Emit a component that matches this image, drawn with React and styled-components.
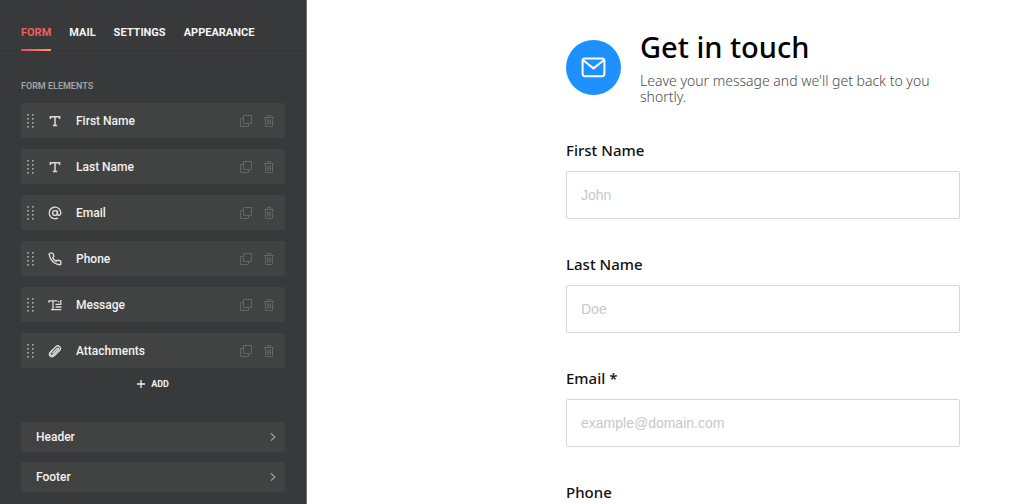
import React from "react";
import styled, { createGlobalStyle } from "styled-components";

const GlobalStyle = createGlobalStyle`
  *, *::before, *::after { box-sizing: border-box; }
  body { margin: 0; background: #fff; }
  button, input { font: inherit; margin: 0; }
`;

const Shell = styled.div`
  display: grid;
  grid-template-columns: 307px minmax(0, 1fr);
  height: 100vh;
`;

const Sidebar = styled.aside`
  background: #38393b;
  border-right: 1px solid #6c6d6e;
  color: #f1f1f1;
  font-family: Roboto, "Liberation Sans", sans-serif;
  overflow-y: auto;
  scrollbar-width: none;
`;

const Tabs = styled.nav`
  display: flex;
  gap: 18px;
  padding: 15px 21px 0;
  border-bottom: 1px solid #333436;
`;

const Tab = styled.a`
  position: relative;
  padding: 10px 0 9px;
  font-size: 11px;
  line-height: 16px;
  font-weight: 700;
  text-decoration: none;
  text-transform: uppercase;
  color: ${(p) => (p.$active ? "#f25c5c" : "#f4f4f4")};

  &::after {
    content: "";
    display: ${(p) => (p.$active ? "block" : "none")};
    position: absolute;
    left: 0;
    right: 0;
    bottom: -1px;
    height: 2px;
    background: linear-gradient(90deg, #f93a78, #f7a14c);
  }
`;

const Panel = styled.div`
  padding: 28px 21px 12px;
`;

const SectionTitle = styled.h2`
  margin: 0 0 10px;
  font-size: 9px;
  line-height: 14px;
  font-weight: 600;
  text-transform: uppercase;
  color: #a3a4a4;
`;

const ElementList = styled.ul`
  display: grid;
  gap: 11px;
  margin: 0;
  padding: 0;
  list-style: none;
`;

const ElementRow = styled.li`
  display: flex;
  align-items: center;
  height: 35px;
  padding: 0 9px 0 5px;
  border-radius: 2px;
  background: #414342;
`;

const ElementIcon = styled.span`
  display: flex;
  margin: 0 13px 0 11px;
  color: #dcdcdc;
`;

const ElementName = styled.span`
  flex: 1;
  font-size: 12px;
  line-height: 16px;
  font-weight: 500;
`;

const IconButton = styled.button`
  display: flex;
  padding: 0;
  border: 0;
  background: none;
  color: ${(p) => (p.$muted ? "#636564" : "#a9aaaa")};
  cursor: pointer;
`;

const RowActions = styled.span`
  display: flex;
  gap: 9px;
`;

const AddButton = styled.button`
  display: flex;
  align-items: center;
  gap: 6px;
  margin: 8px auto 0;
  padding: 0;
  border: 0;
  background: none;
  color: #f1f1f1;
  font-size: 9px;
  line-height: 16px;
  font-weight: 700;
  text-transform: uppercase;
  cursor: pointer;
`;

const Accordions = styled.div`
  display: grid;
  gap: 10px;
  margin-top: 30px;
`;

const AccordionButton = styled.button`
  display: flex;
  align-items: center;
  justify-content: space-between;
  height: 30px;
  padding: 0 7px 0 15px;
  border: 0;
  border-radius: 2px;
  background: #414342;
  color: #f1f1f1;
  font-size: 12px;
  line-height: 16px;
  font-weight: 500;
  cursor: pointer;

  svg { color: #a9aaaa; }
`;

const Preview = styled.main`
  padding: 29px 64px;
  background: #fff;
  font-family: "Noto Sans", "Open Sans", sans-serif;
  overflow-y: auto;
  scrollbar-width: none;
`;

const Form = styled.form`
  width: 100%;
  max-width: 394px;
  margin-left: auto;
`;

const FormHeader = styled.header`
  display: flex;
  align-items: center;
  gap: 19px;
  margin-bottom: 35px;
`;

const Badge = styled.span`
  display: flex;
  flex: none;
  align-items: center;
  justify-content: center;
  width: 55px;
  height: 55px;
  border-radius: 50%;
  background: #1e90ff;
  color: #fff;
`;

const Title = styled.h1`
  margin: 0 0 8px;
  font-size: 29px;
  line-height: 36px;
  font-weight: 500;
  color: #000;
`;

const Subtitle = styled.p`
  margin: 0;
  font-size: 14px;
  line-height: 16px;
  font-weight: 300;
  color: #4c4c4c;
`;

const Field = styled.div`
  display: flex;
  flex-direction: column;
  gap: 11px;
  margin-bottom: 35px;
`;

const Label = styled.label`
  font-size: 15px;
  line-height: 20px;
  font-weight: 500;
  color: #111;
`;

const Input = styled.input`
  width: 100%;
  height: 48px;
  padding: 0 14px;
  border: 1px solid #d6d6d6;
  border-radius: 2px;
  background: #fff;
  font-family: "Liberation Sans", sans-serif;
  font-size: 14px;
  color: #111;

  &::placeholder { color: #c8c8c8; opacity: 1; }
`;

const Svg = ({ size = 16, width = 1.3, children }) => (
  <svg
    width={size}
    height={size}
    viewBox={`0 0 ${size} ${size}`}
    fill="none"
    stroke="currentColor"
    strokeWidth={width}
    aria-hidden="true"
  >
    {children}
  </svg>
);

const TextIcon = () => (
  <Svg width={1.5}>
    <path d="M3.4 6V3.8h9.2V6M8 3.8v9M5.8 12.6h4.4" />
  </Svg>
);

const AtIcon = () => (
  <Svg width={1.4}>
    <circle cx="8" cy="8" r="2.4" />
    <path d="M10.4 5.4v3.2c0 2.4 3.4 2.2 3.4-.6A5.8 5.8 0 1 0 11 12.9" />
  </Svg>
);

const PhoneIcon = () => (
  <Svg size={24} width={2.4}>
    <path d="M22 16.92v3a2 2 0 0 1-2.18 2 19.79 19.79 0 0 1-8.63-3.07 19.5 19.5 0 0 1-6-6 19.79 19.79 0 0 1-3.07-8.67A2 2 0 0 1 4.11 2h3a2 2 0 0 1 2 1.72 12.84 12.84 0 0 0 .7 2.81 2 2 0 0 1-.45 2.11L8.09 9.91a16 16 0 0 0 6 6l1.27-1.27a2 2 0 0 1 2.11-.45 12.84 12.84 0 0 0 2.81.7A2 2 0 0 1 22 16.92z" />
  </Svg>
);

const ScaledIcon = styled.span`
  display: flex;
  padding: 1px;

  svg { width: 14px; height: 14px; }
`;

const MessageIcon = () => (
  <Svg width={1.3}>
    <path d="M2 5.8V3.8h8.4M6 3.8v8.6M4 12.6h10.4M8.6 10h5.8M8.6 7.3h5.8M11 4.6h1.2M13.8 3v5" />
  </Svg>
);

const ClipIcon = () => (
  <Svg width={1.3}>
    <path d="M5 10.6l5-5c1-1 2.2.2 1.2 1.2l-4.9 5c-2 2-4.8-.5-2.8-2.6l5.3-5.4c2.6-2.6 6.4.9 3.8 3.7l-5.4 5.4" />
    <path d="M5.6 7l-2.4 2.5c-2.3 2.5 1 5.9 3.5 3.5l1.2-1.2" />
  </Svg>
);

const GripIcon = () => (
  <svg width="10" height="14" viewBox="0 0 10 14" fill="currentColor" aria-hidden="true">
    {[0, 4, 8, 12].map((y) => (
      <React.Fragment key={y}>
        <rect x="1.2" y={y} width="1.7" height="1.6" />
        <rect x="6" y={y} width="1.7" height="1.6" />
      </React.Fragment>
    ))}
  </svg>
);

const CopyIcon = () => (
  <Svg size={14} width={1}>
    <path d="M4.5 1.5h8v8h-8zM4.5 4.5h-3v8h8v-3" />
  </Svg>
);

const TrashIcon = () => (
  <Svg size={14} width={1}>
    <path d="M2 3.5h10M5.5 3.5v-2h3v2M3.5 3.5v9h7v-9M5.6 5.5v5M7 5.5v5M8.4 5.5v5" />
  </Svg>
);

const ChevronIcon = () => (
  <Svg size={10} width={1.1}>
    <path d="M3 1.4L6.8 5 3 8.6" />
  </Svg>
);

const PlusIcon = () => (
  <Svg size={8} width={1.3}>
    <path d="M4 0v8M0 4h8" />
  </Svg>
);

const MailIcon = () => (
  <svg width="27" height="27" viewBox="0 0 27 27" fill="none" stroke="currentColor" strokeWidth="2" strokeLinejoin="round" aria-hidden="true">
    <rect x="2.6" y="4.4" width="21.8" height="17.8" rx="2.4" />
    <path d="M3.2 6.2l10.3 8.2 10.3-8.2" />
  </svg>
);

const tabs = ["Form", "Mail", "Settings", "Appearance"];

const elements = [
  { name: "First Name", icon: <TextIcon /> },
  { name: "Last Name", icon: <TextIcon /> },
  { name: "Email", icon: <AtIcon /> },
  { name: "Phone", icon: <ScaledIcon><PhoneIcon /></ScaledIcon> },
  { name: "Message", icon: <MessageIcon /> },
  { name: "Attachments", icon: <ClipIcon /> },
];

const fields = [
  { id: "first-name", label: "First Name", placeholder: "John", type: "text" },
  { id: "last-name", label: "Last Name", placeholder: "Doe", type: "text" },
  { id: "email", label: "Email *", placeholder: "example@domain.com", type: "email" },
  { id: "phone", label: "Phone", placeholder: "", type: "tel" },
];

export default function App() {
  return (
    <>
      <GlobalStyle />
      <Shell>
        <Sidebar>
          <Tabs>
            {tabs.map((t, i) => (
              <Tab key={t} href={`#${t.toLowerCase()}`} $active={i === 0}>{t}</Tab>
            ))}
          </Tabs>
          <Panel>
            <SectionTitle>Form elements</SectionTitle>
            <ElementList>
              {elements.map((e) => (
                <ElementRow key={e.name}>
                  <IconButton type="button" aria-label={`Move ${e.name}`}><GripIcon /></IconButton>
                  <ElementIcon>{e.icon}</ElementIcon>
                  <ElementName>{e.name}</ElementName>
                  <RowActions>
                    <IconButton $muted type="button" aria-label={`Duplicate ${e.name}`}><CopyIcon /></IconButton>
                    <IconButton $muted type="button" aria-label={`Delete ${e.name}`}><TrashIcon /></IconButton>
                  </RowActions>
                </ElementRow>
              ))}
            </ElementList>
            <AddButton type="button"><PlusIcon />Add</AddButton>
            <Accordions>
              <AccordionButton type="button">Header<ChevronIcon /></AccordionButton>
              <AccordionButton type="button">Footer<ChevronIcon /></AccordionButton>
            </Accordions>
          </Panel>
        </Sidebar>
        <Preview>
          <Form>
            <FormHeader>
              <Badge><MailIcon /></Badge>
              <div>
                <Title>Get in touch</Title>
                <Subtitle>Leave your message and we'll get back to you shortly.</Subtitle>
              </div>
            </FormHeader>
            {fields.map((f) => (
              <Field key={f.id}>
                <Label htmlFor={f.id}>{f.label}</Label>
                <Input id={f.id} type={f.type} placeholder={f.placeholder} />
              </Field>
            ))}
          </Form>
        </Preview>
      </Shell>
    </>
  );
}
